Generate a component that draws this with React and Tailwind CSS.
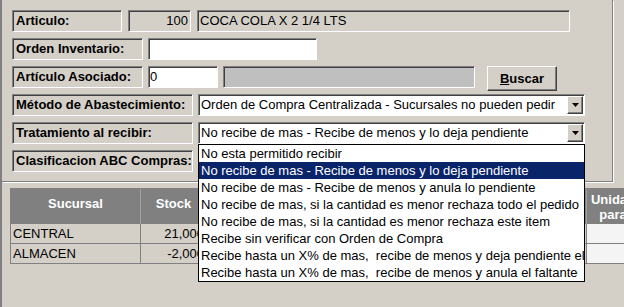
import React from "react";

const font = { fontFamily: '"Liberation Sans", Arial, sans-serif' };

// classic sunken edge used by labels and edits
const sunken =
  "border border-t-[#808080] border-l-[#808080] border-r-white border-b-white shadow-[inset_1px_1px_0_#404040]";

function Label({ children, w }) {
  return (
    <div className={`${sunken} ${w} h-[22px] flex items-center pl-[3px] bg-[#d4d0c8] text-[13px] font-bold text-black`}>
      {children}
    </div>
  );
}

function Arrow() {
  return (
    <div className="w-[16px] h-[18px] bg-[#d4d0c8] border border-t-white border-l-white border-r-[#404040] border-b-[#404040] shadow-[inset_-1px_-1px_0_#808080] flex items-center justify-center">
      <svg width="7" height="4" viewBox="0 0 7 4">
        <path d="M0 0h7L3.5 4z" fill="#000" />
      </svg>
    </div>
  );
}

function Select({ value }) {
  return (
    <div className={`${sunken} w-[387px] h-[22px] bg-white flex items-center justify-between pl-[2px] pr-[1px] text-[13px] text-black`}>
      <span className="whitespace-nowrap">{value}</span>
      <Arrow />
    </div>
  );
}

const options = [
  "No esta permitido recibir",
  "No recibe de mas - Recibe de menos y lo deja pendiente",
  "No recibe de mas - Recibe de menos y anula lo pendiente",
  "No recibe de mas, si la cantidad es menor rechaza todo el pedido",
  "No recibe de mas, si la cantidad es menor rechaza este item",
  "Recibe sin verificar con Orden de Compra",
  "Recibe hasta un X% de mas,  recibe de menos y deja pendiente el faltante",
  "Recibe hasta un X% de mas,  recibe de menos y anula el faltante",
];

export default function App() {
  return (
    <div style={font} className="w-[624px] h-[307px] bg-[#d4d0c8] overflow-hidden border-l-2 border-l-[#808080]">
      {/* Top panel */}
      <div className="w-[611px] h-[182px] border-r border-b border-[#808080] shadow-[1px_1px_0_#fff] pl-[10px] pt-[10px] flex flex-col gap-[6px]">
        <div className="flex gap-[6px] items-start">
          <Label w="w-[110px]">Articulo:</Label>
          <div className={`${sunken} w-[63px] h-[22px] flex items-center justify-end pr-[2px] text-[13px]`}>100</div>
          <div className={`${sunken} w-[373px] h-[22px] flex items-center pl-[2px] text-[13px]`}>COCA COLA X 2 1/4 LTS</div>
        </div>
        <div className="flex gap-[5px] items-start">
          <Label w="w-[131px]">Orden Inventario:</Label>
          <div className={`${sunken} w-[169px] h-[22px] bg-white`} />
        </div>
        <div className="flex items-start h-[22px]">
          <Label w="w-[131px]">Artículo Asociado:</Label>
          <div className={`${sunken} ml-[5px] w-[70px] h-[22px] bg-white flex items-center pl-[1px] text-[13px]`}>0</div>
          <div className={`${sunken} ml-[5px] w-[252px] h-[22px] bg-[#bfbfbf]`} />
          <button className="ml-[12px] w-[70px] h-[25px] bg-[#d4d0c8] border border-t-white border-l-white border-r-[#404040] border-b-[#404040] shadow-[inset_-1px_-1px_0_#808080] text-[13px] font-bold text-black">
            <span className="underline">B</span>uscar
          </button>
        </div>
        <div className="flex gap-[5px] items-start">
          <Label w="w-[181px]">Método de Abastecimiento:</Label>
          <Select value="Orden de Compra Centralizada - Sucursales no pueden pedir" />
        </div>
        <div className="flex gap-[5px] items-start relative">
          <Label w="w-[181px]">Tratamiento al recibir:</Label>
          <Select value="No recibe de mas - Recibe de menos y lo deja pendiente" />
          {/* open list */}
          <div className="absolute left-[186px] top-[22px] z-10 w-[387px] bg-white border border-black text-[13px] text-black overflow-hidden">
            {options.map((o, i) => (
              <div
                key={i}
                className={`h-[17px] leading-[17px] pl-[2px] whitespace-pre ${i === 1 ? "bg-[#0a246a] text-white" : ""}`}
              >
                {o}
              </div>
            ))}
          </div>
        </div>
        <div className="flex gap-[5px] items-start">
          <Label w="w-[181px]">Clasificacion ABC Compras:</Label>
          <Select value="" />
        </div>
      </div>

      {/* Grid */}
      <div className="pl-[8px] pt-[6px]">
        <div className="flex w-[640px] border-l border-t border-[#808080]">
          <div className="w-[130px] flex flex-col">
            <div className="h-[35px] bg-[#808080] text-white font-bold text-[13px] text-center pt-[5px] border-r border-[#a0a0a0]">Sucursal</div>
            <div className="h-[20px] border-b border-r border-[#808080] text-[13px] pl-[2px] leading-[20px]">CENTRAL</div>
            <div className="h-[20px] border-b border-r border-[#808080] text-[13px] pl-[2px] leading-[20px]">ALMACEN</div>
          </div>
          <div className="w-[66px] flex flex-col">
            <div className="h-[35px] bg-[#808080] text-white font-bold text-[13px] text-center pt-[5px] border-r border-[#a0a0a0]">Stock</div>
            <div className="h-[20px] border-b border-r border-[#808080] text-[13px] pr-[2px] text-right leading-[20px]">21,000</div>
            <div className="h-[20px] border-b border-r border-[#808080] text-[13px] pr-[2px] text-right leading-[20px]">-2,000</div>
          </div>
          <div className="w-[380px] flex flex-col">
            <div className="h-[35px] bg-[#808080] border-r border-[#a0a0a0]" />
            <div className="h-[20px] border-b border-r border-[#808080]" />
            <div className="h-[20px] border-b border-r border-[#808080]" />
          </div>
          <div className="w-[52px] flex flex-col">
            <div className="h-[35px] bg-[#808080] text-white font-bold text-[13px] text-center leading-[15px] pt-[3px] whitespace-nowrap">
              Unidad<br />para
            </div>
            <div className="h-[20px] border-b border-[#808080] bg-[#f4f4f4]" />
            <div className="h-[20px] border-b border-[#808080] bg-[#f4f4f4]" />
          </div>
        </div>
      </div>
    </div>
  );
}
